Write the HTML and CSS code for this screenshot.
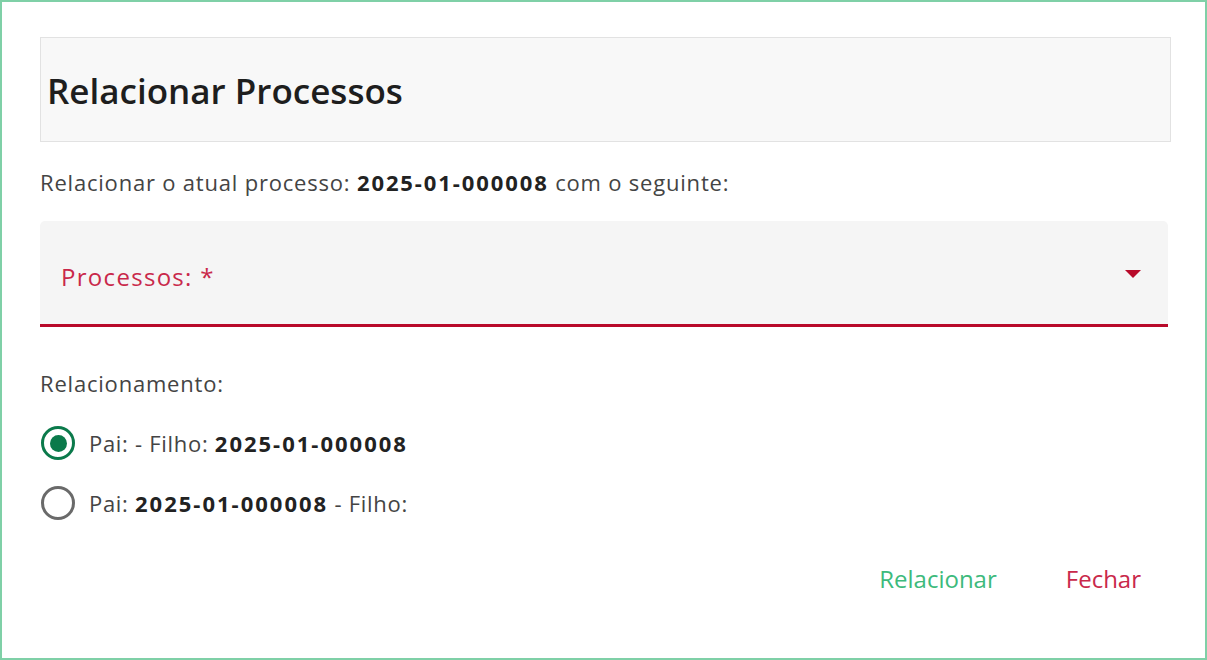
FILE: index.html
```html
<!DOCTYPE html>
<html lang="pt">
  <head>
    <meta charset="UTF-8" />
    <meta name="viewport" content="width=device-width, initial-scale=1.0" />
    <title>Relacionar Processos</title>
    <link rel="stylesheet" href="styles.css">
  </head>
  <body>
    <div class="dialog">
      <div class="header">
        <h2>Relacionar Processos</h2>
      </div>

      <p class="intro">Relacionar o atual processo: <b>2025-01-000008</b> com o seguinte:</p>

      <div class="select-field">
        <span class="select-label">Processos: *</span>
        <span class="select-arrow"></span>
      </div>

      <p class="group-label">Relacionamento:</p>

      <label class="radio-row">
        <input type="radio" name="rel" value="filho" checked />
        <span class="radio-mark"></span>
        <span>Pai: - Filho: <b>2025-01-000008</b></span>
      </label>
      <label class="radio-row">
        <input type="radio" name="rel" value="pai" />
        <span class="radio-mark"></span>
        <span>Pai: <b>2025-01-000008</b> - Filho:</span>
      </label>

      <div class="actions">
        <button type="button" class="btn btn-ok">Relacionar</button>
        <button type="button" class="btn btn-close">Fechar</button>
      </div>
    </div>
  </body>
</html>
```

FILE: styles.css
```css
* {
  margin: 0;
  padding: 0;
  box-sizing: border-box;
  font-family: "Open Sans", "Noto Sans", sans-serif;
}
:root {
  --green: #0b7a4b;
  --green-light: #3dba7c;
  --red: #b80a2a;
  --red-light: #c9284a;
  --text: #444;
}
body {
  background: #fff;
}
.dialog {
  width: 1207px;
  height: 660px;
  border: 2px solid #7fd0a7;
  padding: 35px 34px 0 38px;
  color: var(--text);
}
.header {
  background: #f8f8f8;
  border: 1px solid #e2e2e2;
  height: 105px;
  display: flex;
  align-items: center;
  padding-left: 6px;
}
.header h2 {
  font-size: 35px;
  font-weight: 600;
  color: #1e1e1e;
  padding-top: 2px;
}
.intro {
  font-size: 22px;
  letter-spacing: 0.8px;
  margin-top: 27px;
  line-height: 26px;
}
.intro b {
  font-weight: 700;
  color: #222;
  letter-spacing: 1.9px;
}
.select-field {
  margin-top: 26px;
  margin-right: 3px;
  height: 106px;
  background: #f5f5f5;
  border-radius: 5px 5px 0 0;
  border-bottom: 3px solid var(--red);
  display: flex;
  align-items: center;
  justify-content: space-between;
  padding: 8px 27px 0 21px;
}
.select-label {
  font-size: 24px;
  letter-spacing: 1.3px;
  color: var(--red-light);
}
.select-arrow {
  width: 0;
  height: 0;
  border-left: 8px solid transparent;
  border-right: 8px solid transparent;
  border-top: 8px solid var(--red);
  margin-top: -6px;
}
.group-label {
  font-size: 22px;
  letter-spacing: 0.8px;
  line-height: 26px;
  margin-top: 43px;
}
.radio-row {
  display: flex;
  align-items: center;
  gap: 14px;
  font-size: 22px;
  letter-spacing: 0.7px;
  height: 34px;
  margin-top: 30px;
  cursor: pointer;
}
.radio-row + .radio-row {
  margin-top: 26px;
}
.radio-row b {
  font-weight: 700;
  color: #222;
  letter-spacing: 2px;
}
.radio-row input {
  display: none;
}
.radio-mark {
  width: 34px;
  height: 34px;
  border-radius: 50%;
  border: 3px solid #6a6a6a;
  margin-left: 1px;
  display: flex;
  align-items: center;
  justify-content: center;
}
.radio-row input:checked + .radio-mark {
  border-color: var(--green);
}
.radio-row input:checked + .radio-mark::after {
  content: "";
  width: 17px;
  height: 17px;
  border-radius: 50%;
  background: var(--green);
}
.actions {
  display: flex;
  justify-content: flex-end;
  gap: 69px;
  margin-top: 42px;
  padding-right: 30px;
}
.btn {
  background: none;
  border: none;
  font-size: 24px;
  cursor: pointer;
}
.btn-ok {
  color: var(--green-light);
}
.btn-close {
  color: var(--red-light);
}
```
